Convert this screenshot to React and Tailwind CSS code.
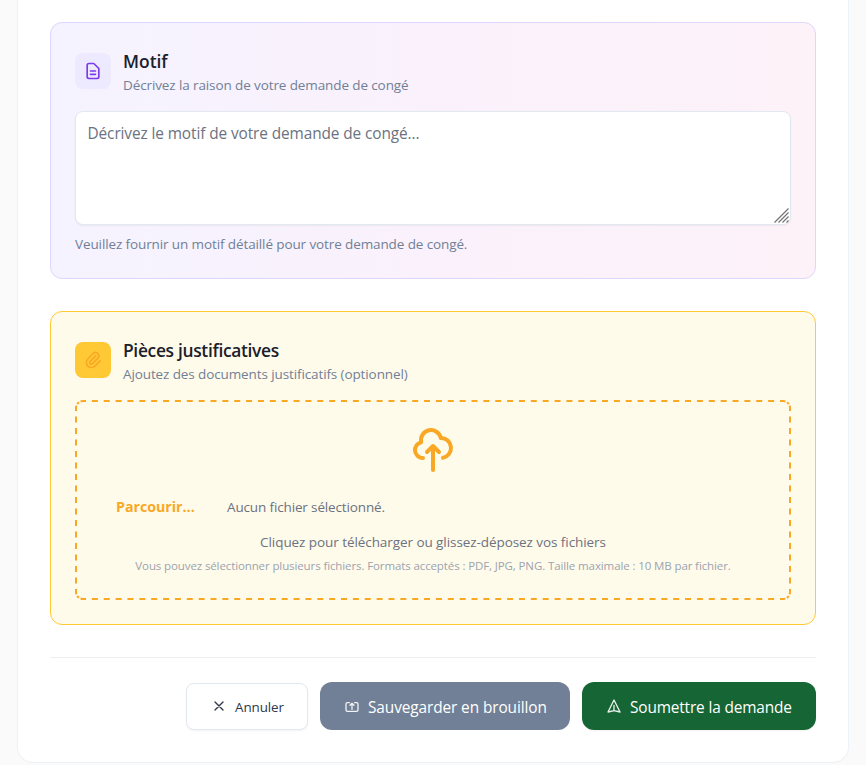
function Icon({ d, className, strokeWidth = 2 }) {
  return (
    <svg
      className={className}
      viewBox="0 0 24 24"
      fill="none"
      stroke="currentColor"
      strokeWidth={strokeWidth}
      strokeLinecap="round"
      strokeLinejoin="round"
      aria-hidden="true"
    >
      <path d={d} />
    </svg>
  );
}

const icons = {
  document:
    "M9 12h6m-6 4h6m2 5H7a2 2 0 01-2-2V5a2 2 0 012-2h5.586a1 1 0 01.707.293l5.414 5.414a1 1 0 01.293.707V19a2 2 0 01-2 2z",
  paperclip:
    "M15.172 7l-6.586 6.586a2 2 0 102.828 2.828l6.414-6.586a4 4 0 00-5.656-5.656l-6.415 6.585a6 6 0 108.486 8.486L20.5 13",
  cloudUpload:
    "M7 16a4 4 0 01-.88-7.903A5 5 0 1115.9 6L16 6a5 5 0 011 9.9M15 13l-3-3m0 0l-3 3m3-3v12",
  close: "M6 18L18 6M6 6l12 12",
  draft:
    "M8 7H5a2 2 0 00-2 2v9a2 2 0 002 2h14a2 2 0 002-2V9a2 2 0 00-2-2h-3m-1 4l-3-3m0 0l-3 3m3-3v9",
  send: "M12 19l9 2-9-18-9 18 9-2zm0 0v-8",
};

// Dashed outline of the drop zone: evenly spaced dashes per side, a short one in each corner.
function DashedFrame() {
  return (
    <svg
      className="pointer-events-none absolute inset-0 h-[200px] w-[716px]"
      viewBox="0 0 716 200"
      fill="none"
      stroke="#f9a825"
      strokeWidth="2"
      aria-hidden="true"
    >
      <path d="M8 1H708M8 199H708" strokeDasharray="6 5.864" strokeDashoffset="3" />
      <path d="M1 8V192M715 8V192" strokeDasharray="6 5.5" strokeDashoffset="3" />
      <path d="M8 1A7 7 0 0 0 1 8" strokeDasharray="2.5 1.7 2.6 1.7 2.5" />
      <path d="M708 1A7 7 0 0 1 715 8" strokeDasharray="2.5 1.7 2.6 1.7 2.5" />
      <path d="M715 192A7 7 0 0 1 708 199" strokeDasharray="2.5 1.7 2.6 1.7 2.5" />
      <path d="M8 199A7 7 0 0 1 1 192" strokeDasharray="2.5 1.7 2.6 1.7 2.5" />
    </svg>
  );
}

function SectionHeader({ icon, iconClass, title, titleClass, subtitle }) {
  return (
    <div className="flex h-12 items-center gap-3">
      <div className={`flex size-9 items-center justify-center rounded-lg ${iconClass}`}>
        <Icon d={icon} className="size-5" />
      </div>
      <div className="pt-[2px] whitespace-nowrap">
        <h3 className={`leading-[27px] font-semibold text-[#1a202c] ${titleClass}`}>{title}</h3>
        <p className="text-[13.5px] leading-[21px] tracking-[-0.11px] text-[#718096]">{subtitle}</p>
      </div>
    </div>
  );
}

export default function App() {
  return (
    <div className="h-[765px] overflow-hidden bg-[#fafafa] px-[17px] font-['Open_Sans','Noto_Sans',sans-serif]">
      <main className="h-[763px] rounded-b-2xl border border-t-0 border-[#edf2f7] bg-white px-8 pt-[22px]">
        <section className="h-[257px] rounded-xl border border-[#ddd6fe] bg-linear-to-r from-[#f5f3ff] via-[#faf1fc] to-[#fdf2f8] px-6 pt-6">
          <SectionHeader
            icon={icons.document}
            iconClass="bg-[#ede9fe] text-[#7c3aed]"
            title="Motif"
            titleClass="text-[17.4px]"
            subtitle="Décrivez la raison de votre demande de congé"
          />
          <div className="relative mt-4 h-[114px]">
            <textarea
              placeholder="Décrivez le motif de votre demande de congé..."
              className="block h-full w-full resize-none rounded-lg border border-[#e2e8f0] bg-white px-[11.5px] py-[10px] text-[15.4px] leading-6 tracking-[-0.1px] shadow-xs outline-none placeholder:text-[#6b7280]"
            />
            <svg
              className="absolute right-[2px] bottom-[2px] size-[15px]"
              viewBox="0 0 15 15"
              stroke="#737373"
              strokeWidth="1.2"
              aria-hidden="true"
            >
              <path d="M.5 14.5l14-14M4.500 14.500l10-10M8.500 14.500l6-6M12.500 14.500l2-2" />
            </svg>
          </div>
          <p className="mt-[9px] text-[13.5px] leading-[21px] tracking-[-0.11px] text-[#718096]">
            Veuillez fournir un motif détaillé pour votre demande de congé.
          </p>
        </section>

        <section className="mt-8 h-[314px] rounded-xl border border-[#ffc936] bg-[#fffbeb] px-6 pt-6">
          <SectionHeader
            icon={icons.paperclip}
            iconClass="bg-[#ffc936] text-[#f9a825]"
            title="Pièces justificatives"
            titleClass="text-[17.4px] tracking-[-0.32px]"
            subtitle="Ajoutez des documents justificatifs (optionnel)"
          />
          <div className="relative mt-4 flex h-[200px] flex-col items-center pt-[26px]">
            <DashedFrame />
            <Icon d={icons.cloudUpload} className="size-12 text-[#f9a825]" />
            <div className="mt-[23px] flex h-[21px] w-full items-center gap-8 pl-[41px] whitespace-nowrap">
              <button
                type="button"
                className="w-[79px] pb-[2px] text-left text-[14.2px] leading-[21px] font-bold text-[#f9a825]"
              >
                Parcourir...
              </button>
              <span className="text-[13.5px] leading-[21px] tracking-[-0.14px] text-[#6b7280]">
                Aucun fichier sélectionné.
              </span>
            </div>
            <p className="mt-[14px] text-[13.5px] leading-[21px] tracking-[-0.07px] text-[#6b7280]">
              Cliquez pour télécharger ou glissez-déposez vos fichiers
            </p>
            <p className="mt-1 text-[11.5px] leading-[18px] tracking-[-0.11px] whitespace-nowrap text-[#9ca3af]">
              Vous pouvez sélectionner plusieurs fichiers. Formats acceptés : PDF, JPG, PNG. Taille maximale : 10 MB par
              fichier.
            </p>
          </div>
        </section>

        <footer className="mt-8 flex items-center justify-end gap-3 border-t border-[#edf0f2] pt-6 whitespace-nowrap">
          <button
            type="button"
            className="mt-px flex h-[47px] w-[122px] items-center rounded-lg border border-[#e2e8f0] bg-white pl-6 text-[13.4px] tracking-[-0.08px] text-[#2d3748] shadow-xs"
          >
            <Icon d={icons.close} className="mr-2 mb-[2px] size-4" />
            <span className="pt-px">Annuler</span>
          </button>
          <button
            type="button"
            className="flex h-12 w-[250px] items-center rounded-xl bg-[#718096] pl-6 text-[15.4px] tracking-[-0.1px] text-white"
          >
            <Icon d={icons.draft} className="mr-2 size-4 opacity-90" />
            <span className="pt-[4px]">Sauvegarder en brouillon</span>
          </button>
          <button
            type="button"
            className="flex h-12 w-[234px] items-center rounded-xl bg-[#166534] pl-6 text-[15.4px] tracking-[-0.15px] text-white shadow-xs"
          >
            <Icon d={icons.send} className="mr-2 size-4 opacity-90" />
            <span className="pt-[4px]">Soumettre la demande</span>
          </button>
        </footer>
      </main>
    </div>
  );
}
